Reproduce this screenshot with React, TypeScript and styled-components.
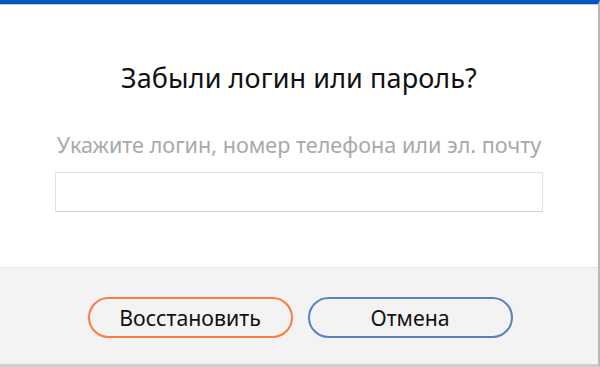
import React, { useState } from 'react';
import styled, { createGlobalStyle } from 'styled-components';

const GlobalStyle = createGlobalStyle`
  html, body {
    margin: 0;
    padding: 0;
    background: #ffffff;
  }
  body {
    font-family: "Noto Sans", Roboto, Arial, sans-serif;
  }
  * {
    box-sizing: border-box;
  }
`;

const Dialog = styled.div`
  width: 600px;
  height: 367px;
  display: flex;
  flex-direction: column;
  background: #ffffff;
  border-top: 4px solid #0257bc;
  border-right: 2px solid #b8b8b8;
  border-bottom: 3px solid #cdcdcd;
  box-shadow: inset 0 1px 0 #b3cdee;
`;

const Body = styled.div`
  height: 263px;
  display: flex;
  flex-direction: column;
  align-items: center;
  padding: 56px 55px 0;
`;

const Title = styled.h2`
  margin: 0;
  font-size: 27px;
  font-weight: 400;
  line-height: 36px;
  color: #111111;
  letter-spacing: 0.1px;
`;

const Hint = styled.p`
  margin: 37px 0 0;
  font-size: 21.6px;
  font-weight: 400;
  line-height: 24px;
  color: #a9a9a9;
`;

const Field = styled.input`
  margin-top: 15px;
  width: 488px;
  height: 40px;
  border: 1px solid #e3e3e3;
  border-bottom-color: #cfcfcf;
  outline: none;
  padding: 0 10px;
  font-family: inherit;
  font-size: 16px;
  background: #ffffff;
`;

const Footer = styled.div`
  flex: 1;
  display: flex;
  justify-content: center;
  align-items: flex-start;
  gap: 15px;
  padding-top: 29px;
  padding-left: 2px;
  background: #f3f3f3;
  border-top: 1px solid #e6e6e6;
`;

const Button = styled.button<{ tone: 'orange' | 'blue' }>`
  width: 205px;
  height: 41px;
  border-radius: 21px;
  border: 2px solid ${p => (p.tone === 'orange' ? '#ff7a3d' : '#5b80c2')};
  background: transparent;
  font-family: inherit;
  font-size: 21.3px;
  color: #111111;
  cursor: pointer;
`;

export default function App() {
  const [value, setValue] = useState('');
  return (
    <>
      <GlobalStyle />
      <Dialog>
        <Body>
          <Title>Забыли логин или пароль?</Title>
          <Hint>Укажите логин, номер телефона или эл. почту</Hint>
          <Field value={value} onChange={e => setValue(e.target.value)} />
        </Body>
        <Footer>
          <Button tone="orange">Восстановить</Button>
          <Button tone="blue">Отмена</Button>
        </Footer>
      </Dialog>
    </>
  );
}
